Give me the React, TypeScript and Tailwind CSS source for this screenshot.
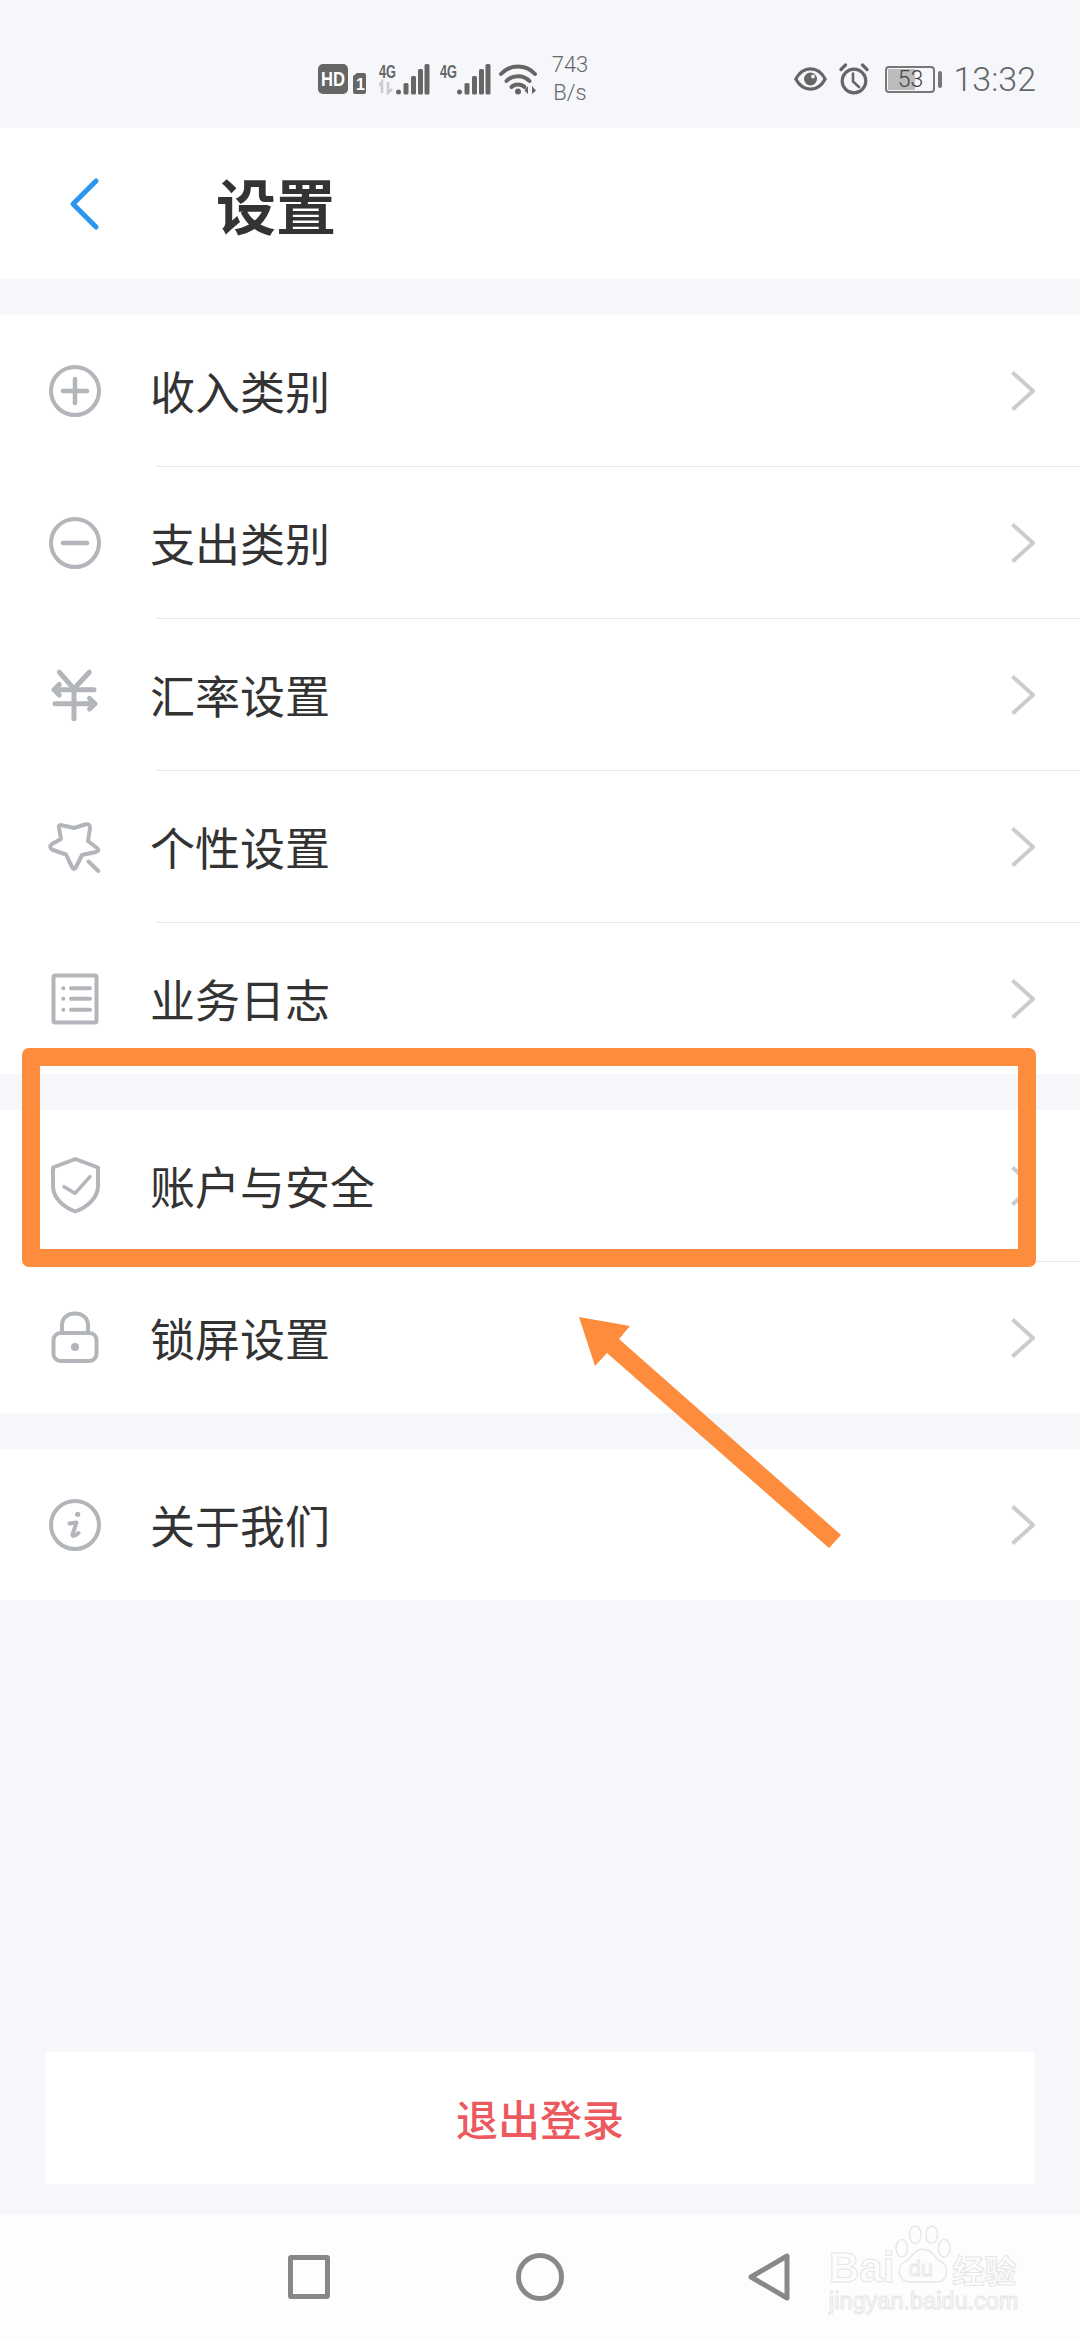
import React from "react";

const cjk = "font-['Noto_Sans_CJK_SC','Noto_Sans',sans-serif]";

const S = { fill: "none", stroke: "#b2b5b9", strokeWidth: 4, strokeLinecap: "round", strokeLinejoin: "round" } as const;

function RowIcon({ children }: { children: React.ReactNode }) {
  return (
    <svg width="60" height="60" viewBox="0 0 60 60" className="shrink-0" {...S}>
      {children}
    </svg>
  );
}

const icons: Record<string, React.ReactNode> = {
  plus: (
    <>
      <circle cx="30" cy="30" r="24" />
      <path d="M18 30H42M30 18V42" strokeWidth="4.5" />
    </>
  ),
  minus: (
    <>
      <circle cx="30" cy="30" r="24" />
      <path d="M18 30H42" strokeWidth="4.5" />
    </>
  ),
  yuan: (
    <g strokeWidth="5">
      <path d="M14.3 7.2L29 23.8L44.3 7.2M29 23.8V53.8" />
      <path d="M9 24.8H49M14.3 19.5L9 24.8L14.3 30" />
      <path d="M10 38.8H50M44.5 33.5L50 38.8L44.5 44" />
    </g>
  ),
  star: (
    <>
      <path d="M18 8.5L29 11L40 7.5Q45 6 45 11L43 24L52 31Q55 34 51 35L37 38L31 50Q29 54 27 50L21 37.5L8 33Q3 30 7 27L16 22L14 11Q13 7 18 8.5Z" />
      <path d="M43.5 44.5L53.3 54" />
    </>
  ),
  list: (
    <>
      <rect x="8.5" y="6.5" width="43" height="47" rx="1.5" />
      <path d="M26 19.2H45M26 29.8H45M26 40.8H45" />
      <path d="M18.3 19.2H18.4M18.3 29.8H18.4M18.3 40.8H18.4" />
    </>
  ),
  shield: (
    <>
      <path d="M30.3 3L53 11.5V30C53 42 42 51 30.3 55.5C18.5 51 8 42 8 30V11.5Z" />
      <path d="M19 30.7L30 37.3L45 20.7" strokeWidth="3.5" />
    </>
  ),
  lock: (
    <>
      <rect x="8.5" y="25" width="43" height="28" rx="7" />
      <path d="M17 24.5V17C17 9.5 23 5.5 30 5.5C37 5.5 43 9.5 43 17V24.5" />
      <circle cx="30" cy="39" r="4" fill="#b2b5b9" stroke="none" />
    </>
  ),
  info: (
    <>
      <circle cx="30" cy="30" r="24" />
      <circle cx="32.7" cy="19.3" r="2.6" fill="#b2b5b9" stroke="none" />
      <path d="M24.5 28.5L31.5 27.5L27.5 39.5C27 41.5 30 41 33.5 38" />
    </>
  ),
};

function Row({ icon, label, divider = true }: { icon: string; label: string; divider?: boolean }) {
  return (
    <div className={`flex items-center bg-white pl-[45px] ${divider ? "h-[152px]" : "h-[151px]"}`}>
      <RowIcon>{icons[icon]}</RowIcon>
      <div
        className={`ml-[51px] flex h-full flex-1 items-center justify-between pr-[45px] ${
          divider ? "border-b border-[#e4e6e8]" : ""
        }`}
      >
        <span className={`-ml-[6px] text-[45px] leading-none text-[#333333] ${cjk}`}>{label}</span>
        <svg width="24" height="40" viewBox="0 0 24 40" fill="none" stroke="#cccccc" strokeWidth="4">
          <path d="M1.5 1.5L22 20L1.5 38.5" />
        </svg>
      </div>
    </div>
  );
}

function Bars() {
  return (
    <>
      <rect x="17" y="26.5" width="5" height="5" rx="2.5" />
      <rect x="24.5" y="20" width="5" height="11.5" rx="1.5" />
      <rect x="32" y="13" width="5" height="18.5" rx="1.5" />
      <rect x="39" y="6" width="5" height="25.5" rx="1.5" />
      <rect x="45.5" y="1" width="5" height="30.5" rx="1.5" />
    </>
  );
}

function Tag4G() {
  return (
    <text
      x="0"
      y="15"
      fontSize="18"
      fontWeight="700"
      fontFamily="Liberation Sans"
      textLength="17"
      lengthAdjust="spacingAndGlyphs"
    >
      4G
    </text>
  );
}

function StatusBar() {
  return (
    <div className="flex h-[128px] items-center justify-between pl-[318px] pr-[44px] pt-[30px] text-[#666666]">
      <div className="flex items-center">
        <svg width="48" height="30" viewBox="0 0 48 30">
          <rect width="30" height="30" rx="5" fill="#666666" />
          <text x="3" y="22" fontSize="20" fontWeight="700" fill="#ffffff" fontFamily="Liberation Sans" textLength="24" lengthAdjust="spacingAndGlyphs">
            HD
          </text>
          <path d="M35 12L39 9H46Q48 9 48 11V28Q48 30 46 30H37Q35 30 35 28Z" fill="#666666" />
          <text x="38" y="26" fontSize="16" fontWeight="700" fill="#ffffff" fontFamily="Liberation Sans">
            1
          </text>
        </svg>
        <svg width="51" height="32" viewBox="0 0 51 32" className="ml-[13px]" fill="#666666">
          <Tag4G />
          <Bars />
          <path d="M3 30V19L0 23M9 19V30L13 26" fill="none" stroke="#cccccc" strokeWidth="2.5" />
        </svg>
        <svg width="51" height="32" viewBox="0 0 51 32" className="ml-[10px]" fill="#666666">
          <Tag4G />
          <Bars />
        </svg>
        <svg width="38" height="32" viewBox="0 0 38 32" className="ml-[8px]" fill="none" stroke="#666666" strokeWidth="4" strokeLinecap="round">
          <path d="M2 11C11 1 27 1 36 11" />
          <path d="M7.5 18C13.5 11.5 24.5 11.5 30.5 18" />
          <path d="M12.5 24C16 20.5 22 20.5 25.5 24" />
          <circle cx="19" cy="28.5" r="3" fill="#666666" stroke="none" />
          <path d="M29 23V31L25.5 27.5ZM33 23V31L37 27.5Z" fill="#666666" stroke="none" />
        </svg>
        <div className="ml-[14px] flex w-[38px] flex-col items-center font-['Roboto',sans-serif] text-[22px] font-light leading-[28px]">
          <span>743</span>
          <span>B/s</span>
        </div>
      </div>
      <div className="flex items-center">
        <svg width="33" height="26" viewBox="0 0 33 26" fill="none" stroke="#666666" strokeWidth="3.2">
          <path d="M1.8 13C9 -0.5 24 -0.5 31.2 13C24 26.5 9 26.5 1.8 13Z" />
          <circle cx="16.5" cy="13" r="6.5" fill="#666666" stroke="none" />
          <circle cx="19" cy="10.5" r="2" fill="#f5f7fb" stroke="none" />
        </svg>
        <svg width="30" height="32" viewBox="0 0 30 32" className="ml-[12px]" fill="none" stroke="#666666" strokeWidth="3.2" strokeLinecap="round">
          <circle cx="15" cy="18" r="11.8" />
          <path d="M14 10.5V18.5L20 24" strokeWidth="2.6" />
          <path d="M2 6.5L6.5 2M28 6.5L23.5 2" />
        </svg>
        <div className="relative ml-[16px] flex h-[27px] w-[50px] items-center justify-center rounded-[4px] border-2 border-[#777777]">
          <div className="absolute inset-y-px left-px w-[27px] bg-[#bcbcbc]" />
          <span className="relative font-['Roboto',sans-serif] text-[23px] font-light leading-none text-[#444444]">53</span>
        </div>
        <div className="ml-[3px] h-[17px] w-[4px] rounded-sm bg-[#777777]" />
        <span className="ml-[11px] font-['Roboto',sans-serif] text-[34px] font-light leading-none">13:32</span>
      </div>
    </div>
  );
}

function Watermark() {
  const outlined = "text-transparent [-webkit-text-stroke:1px_#e6e6e6] leading-none";
  const latin = "font-['Liberation_Sans',sans-serif]";
  return (
    <div className="absolute left-[829px] top-[11px] w-[200px]">
      <div className="flex items-end">
        <span className={`${outlined} ${latin} -mb-[6px] text-[42px] font-bold`}>Bai</span>
        <svg width="58" height="58" viewBox="0 0 60 60" fill="none" stroke="#e6e6e6" strokeWidth="1.5">
          <ellipse cx="8" cy="24" rx="6" ry="9" />
          <ellipse cx="22" cy="10" rx="6" ry="9" />
          <ellipse cx="39" cy="10" rx="6" ry="9" />
          <ellipse cx="52" cy="24" rx="6" ry="9" />
          <path d="M30 25C40 25 42 35 50 39C58 44 55 59 44 59H16C5 59 2 44 10 39C18 35 20 25 30 25Z" />
          <text x="15" y="53" fontSize="23" fontFamily="Liberation Sans" fill="none" stroke="#e6e6e6" strokeWidth="1">
            du
          </text>
        </svg>
        <span className={`${outlined} ${cjk} -mb-[2px] text-[32px] font-bold`}>经验</span>
      </div>
      <div className={`${outlined} ${latin} mt-[7px] text-[23.5px]`}>jingyan.baidu.com</div>
    </div>
  );
}

function NavBar() {
  return (
    <div className="relative flex h-[126px] items-center bg-[#fdfdfd] pl-[288px]">
      <div className="h-[44px] w-[42px] rounded-[3px] border-[5px] border-[#888888]" />
      <div className="ml-[186px] h-[48px] w-[48px] rounded-full border-[5px] border-[#888888]" />
      <svg width="44" height="48" viewBox="0 0 44 48" className="ml-[184px]" fill="none" stroke="#888888" strokeWidth="5" strokeLinejoin="round">
        <path d="M39 3V45L3 24Z" />
      </svg>
      <Watermark />
    </div>
  );
}

export default function App() {
  return (
    <div className={`relative flex min-h-[2340px] w-[1080px] flex-col overflow-hidden bg-[#f5f7fb] ${cjk}`}>
      <StatusBar />
      <div className="flex h-[151px] items-center bg-white pl-[68px]">
        <svg width="32" height="54" viewBox="0 0 32 54" fill="none" stroke="#2b96ee" strokeWidth="5" strokeLinecap="round" strokeLinejoin="round">
          <path d="M28 4L5 27L28 50" />
        </svg>
        <h1 className={`ml-[116px] text-[60px] font-bold leading-none text-[#333333] ${cjk}`}>设置</h1>
      </div>

      <div className="mt-[36px]">
        <Row icon="plus" label="收入类别" />
        <Row icon="minus" label="支出类别" />
        <Row icon="yuan" label="汇率设置" />
        <Row icon="star" label="个性设置" />
        <Row icon="list" label="业务日志" divider={false} />
      </div>
      <div className="mt-[36px]">
        <Row icon="shield" label="账户与安全" />
        <Row icon="lock" label="锁屏设置" divider={false} />
      </div>
      <div className="mt-[36px]">
        <Row icon="info" label="关于我们" divider={false} />
      </div>

      <div className="mx-[45px] mt-auto flex h-[132px] items-center justify-center bg-white">
        <span className={`text-[42px] font-medium leading-none text-[#ec5a60] ${cjk}`}>退出登录</span>
      </div>
      <div className="mt-[30px]">
        <NavBar />
      </div>

      {/* annotation drawn over the screenshot */}
      <div className="absolute left-[22px] top-[1048px] h-[219px] w-[1014px] rounded-[7px] border-[18px] border-[#fe8c3d]" />
      <svg className="absolute left-0 top-0" width="1080" height="2340" viewBox="0 0 1080 2340" fill="#fe8c3d">
        <polygon points="579,1317 630,1326 619,1339 841,1535 829,1548 607,1353 595,1366" />
      </svg>
    </div>
  );
}
